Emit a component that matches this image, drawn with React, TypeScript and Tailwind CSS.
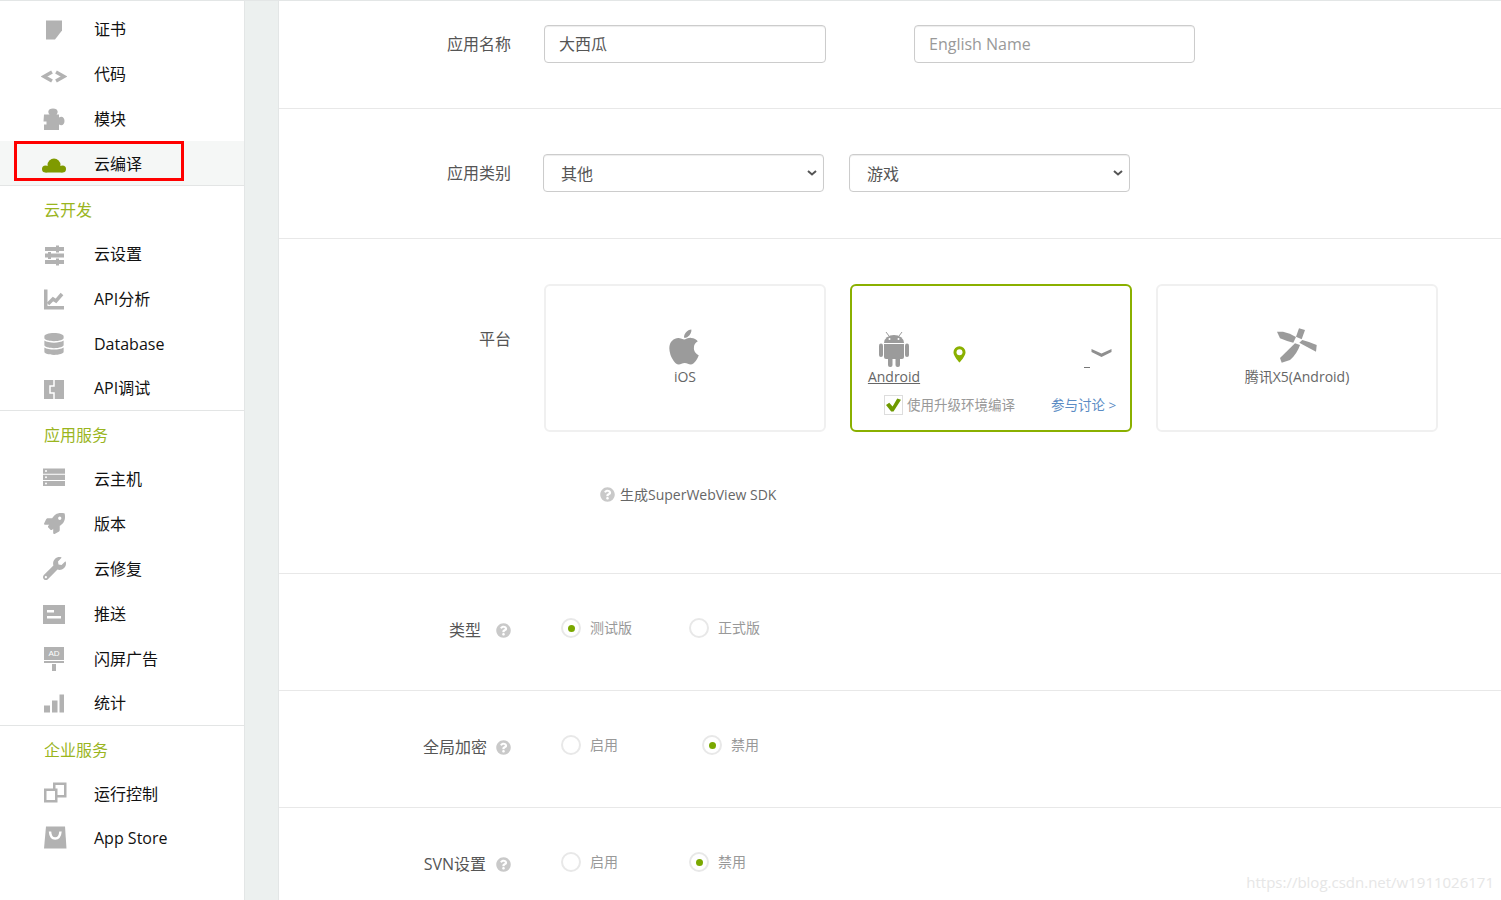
import type { ReactNode } from "react";
import { FaApple, FaCloud, FaDatabase, FaRocket, FaWrench, FaQuestionCircle } from "react-icons/fa";

const G = "#b2b2b2";

function Slot({ children }: { children: ReactNode }) {
  return (
    <svg viewBox="0 0 26 26" className="w-[26px] h-[26px] shrink-0" fill={G}>
      {children}
    </svg>
  );
}

function Fa({ I, size }: { I: typeof FaCloud; size: number }) {
  return (
    <span className="w-[26px] h-[26px] shrink-0 flex items-center justify-center">
      <I size={size} color={G} />
    </span>
  );
}

const icons: Record<string, ReactNode> = {
  cert: <Slot><path d="M5 4.500h16v10l-7 9H5z" /></Slot>,
  code: (
    <Slot>
      <path d="M11 11l-8 4.500 8 4.500M15 11l8 4.500-8 4.500" fill="none" stroke={G} strokeWidth="3.500" />
    </Slot>
  ),
  puzzle: (
    <Slot>
      <path d="M3 8.500h5.500c-.8-.8-1.200-1.700-1.200-2.700C7.300 3.700 9.300 2.500 12 2.500s4.700 1.200 4.700 3.300c0 1-.4 1.900-1.200 2.700H18v3c.7-.5 1.500-.8 2.200-.8 2 0 3.300 1.800 3.300 4.300s-1.300 4.300-3.300 4.300c-.7 0-1.500-.3-2.200-.8v5.500H3v-5.500h2.500v-3H2.500z" />
    </Slot>
  ),
  cloud: (
    <svg viewBox="0 0 26 26" className="w-[26px] h-[26px] shrink-0" fill="#7f9a00">
      <circle cx="4.500" cy="18" r="3.500" />
      <circle cx="13" cy="14" r="6.500" />
      <circle cx="21.500" cy="18" r="3.500" />
      <rect x="4.500" y="15" width="17" height="6.500" />
    </svg>
  ),
  sliders: (
    <Slot>
      <path d="M4 6h19v4H4zM4 12.500h19v4H4zM4 19h19v4H4z" />
      <path d="M15 4.500h3v7h-3zM7 11h3v7H7zM15 17.500h3v7h-3z" />
    </Slot>
  ),
  chart: (
    <Slot>
      <path d="M3 3.500h3.500V20H23v3.500H3z" />
      <path d="M7 18l5-5 3 2 6-7" fill="none" stroke={G} strokeWidth="3.500" />
    </Slot>
  ),
  db: <Fa I={FaDatabase} size={22} />,
  api: (
    <Slot>
      <rect x="3" y="5" width="20" height="19" />
      <path d="M13 5v6H9v7h4v6" fill="none" stroke="#fff" strokeWidth="1.500" />
    </Slot>
  ),
  server: (
    <Slot>
      <path d="M2 2.500h22v5.200H2zM2 8.700h22v5.200H2zM2 14.900h22v5.100H2z" />
      <circle cx="5" cy="5" r="1" fill="#fff" />
      <circle cx="5" cy="11.300" r="1" fill="#fff" />
      <circle cx="5" cy="17.500" r="1" fill="#fff" />
    </Slot>
  ),
  rocket: <Fa I={FaRocket} size={21} />,
  wrench: <Fa I={FaWrench} size={23} />,
  push: (
    <Slot>
      <path d="M2 4h22v19H2z" />
      <path d="M6 9h7v2.500H6zM6 15h14v2.500H6z" fill="#fff" />
    </Slot>
  ),
  ad: (
    <Slot>
      <path d="M3 1h20v13H3zM3 15h20v2H3zM11 18h4v7h-4z" />
      <text x="13" y="10" textAnchor="middle" fontSize="8" fill="#fff" fontFamily="Liberation Sans, sans-serif">AD</text>
    </Slot>
  ),
  bars: (
    <Slot>
      <path d="M3 15.500h6v7H3zM11 10.500h5.500v12H11zM18.500 4.500H23v18h-4.500z" />
    </Slot>
  ),
  windows: (
    <Slot>
      <rect x="13.250" y="2.750" width="11" height="12.500" fill="#fff" stroke={G} strokeWidth="2.500" />
      <rect x="4.250" y="8.750" width="11" height="11.500" fill="#fff" stroke={G} strokeWidth="2.500" />
    </Slot>
  ),
  bag: (
    <Slot>
      <path d="M5 1.500h19l1.500 22H3z" />
      <path d="M9 6.500q.5 7 5.200 7t5.300-7" fill="none" stroke="#fff" strokeWidth="2.500" />
    </Slot>
  ),
};

function Item({ icon, label, active }: { icon: string; label: string; active?: boolean }) {
  return (
    <div className={`h-[45px] last:h-[44px] flex items-center pl-[41px] text-[16px] text-[#111] ${active ? "bg-[#f5f7f6] pt-px" : ""}`}>
      {icons[icon]}
      <span className="ml-[27px]">{label}</span>
    </div>
  );
}

function Heading({ label }: { label: string }) {
  return <div className="h-[45px] flex items-center pl-[44px] pt-[2px] text-[16px] text-[#9ab51e]">{label}</div>;
}

function Help({ className = "" }: { className?: string }) {
  return <FaQuestionCircle size={15} color="#c9c9c9" className={className} />;
}

function Radio({ label, on, width }: { label: string; on?: boolean; width: string }) {
  return (
    <div className={`flex items-center h-[20px] ${width}`}>
      <span className="w-[20px] h-[20px] rounded-full border-2 border-[#e8e8e8] flex items-center justify-center shrink-0">
        {on && <span className="w-[7px] h-[7px] rounded-full bg-[#7aa800]" />}
      </span>
      <span className="ml-[9px] -mt-[2px] text-[14px] text-[#999] whitespace-nowrap">{label}</span>
    </div>
  );
}

function RadioRow({ label, a, b, first, aOn, last, gap }: { label: string; a: string; b: string; first: string; aOn?: boolean; last?: boolean; gap: string }) {
  return (
    <div className={`h-[117px] flex items-start pt-[44px] ${last ? "" : "border-b border-[#e8e8e8]"}`}>
      <div className="w-[232px] h-[24px] flex items-center justify-end text-[16px] text-[#555]">
        <span>{label}</span>
        <Help className={gap} />
      </div>
      <div className="flex ml-[50px]">
        <Radio label={a} on={aOn} width={first} />
        <Radio label={b} on={!aOn} width="w-auto" />
      </div>
    </div>
  );
}

const field = "h-[38px] rounded-[4px] border border-[#ccc] bg-white text-[16px] outline-none shadow-[inset_0_1px_1px_rgba(0,0,0,0.075)]";

function Card({ children, selected }: { children: ReactNode; selected?: boolean }) {
  return (
    <div className={`w-[282px] h-[148px] rounded-[6px] border-2 ${selected ? "border-[#8ab000]" : "border-[#f0f0f0]"}`}>
      {children}
    </div>
  );
}

function SelectBox({ value, className }: { value: string; className: string }) {
  return (
    <div className={`relative w-[281px] ${className}`}>
      <select defaultValue={value} className={`${field} w-full appearance-none pl-[17px] pt-[2px] text-[#555]`}>
        <option>{value}</option>
      </select>
      <svg viewBox="0 0 10 6" className="absolute right-[7px] top-[16px] w-[10px] h-[6px] pointer-events-none">
        <path d="M1 1l4 3.500L9 1" fill="none" stroke="#555" strokeWidth="2" />
      </svg>
    </div>
  );
}

export default function App() {
  return (
    <div className="relative flex h-[900px] w-full overflow-hidden border-t border-[#e3e6e6] bg-white font-['Open_Sans','Noto_Sans_CJK_SC',sans-serif]">
      <aside className="w-[244px] shrink-0 pt-[5px]">
        <div className="relative border-b border-[#e3e5e5]">
          <div className="absolute left-[14px] top-[135px] w-[170px] h-[40px] border-[3px] border-[#f00]" />
          <Item icon="cert" label="证书" />
          <Item icon="code" label="代码" />
          <Item icon="puzzle" label="模块" />
          <Item icon="cloud" label="云编译" active />
        </div>
        <div className="border-b border-[#e3e5e5]">
          <Heading label="云开发" />
          <Item icon="sliders" label="云设置" />
          <Item icon="chart" label="API分析" />
          <Item icon="db" label="Database" />
          <Item icon="api" label="API调试" />
        </div>
        <div className="border-b border-[#e3e5e5]">
          <Heading label="应用服务" />
          <Item icon="server" label="云主机" />
          <Item icon="rocket" label="版本" />
          <Item icon="wrench" label="云修复" />
          <Item icon="push" label="推送" />
          <Item icon="ad" label="闪屏广告" />
          <Item icon="bars" label="统计" />
        </div>
        <div>
          <Heading label="企业服务" />
          <Item icon="windows" label="运行控制" />
          <Item icon="bag" label="App Store" />
        </div>
      </aside>

      <div className="w-[35px] shrink-0 bg-[#ecf0ef] border-x border-[#e3e6e6]" />

      <main className="flex-1 min-w-0">
        <div className="h-[108px] border-b border-[#e8e8e8] flex items-start pt-[24px]">
          <div className="w-[232px] h-[38px] flex items-center justify-end text-[16px] text-[#555]">应用名称</div>
          <input defaultValue="大西瓜" className={`${field} w-[282px] ml-[33px] px-[14px] pb-[2px] text-[#555]`} />
          <input placeholder="English Name" className={`${field} w-[281px] ml-[88px] px-[14px] text-[#555] placeholder:text-[#999]`} />
        </div>

        <div className="h-[130px] border-b border-[#e8e8e8] flex items-start pt-[45px]">
          <div className="w-[232px] h-[38px] flex items-center justify-end text-[16px] text-[#555]">应用类别</div>
          <SelectBox value="其他" className="ml-[32px]" />
          <SelectBox value="游戏" className="ml-[25px]" />
        </div>

        <div className="h-[335px] border-b border-[#e8e8e8] flex items-start pt-[45px]">
          <div className="w-[232px] h-[24px] mt-[43px] flex items-center justify-end text-[16px] text-[#555]">平台</div>
          <div className="ml-[33px]">
            <div className="flex gap-[24px]">
              <Card>
                <div className="flex flex-col items-center pt-[41px] text-[14px] text-[#666]">
                  <FaApple size={40} color="#9b9b9b" className="-ml-[2px]" />
                  <span className="leading-[20px]">iOS</span>
                </div>
              </Card>
              <Card selected>
                <div className="pt-[46px] pl-[15px] flex items-start">
                  <div className="w-[54px] flex flex-col items-center">
                    <svg viewBox="0 0 30 35" className="w-[30px] h-[35px]" fill="#9b9b9b">
                      <path d="M7 0l3 4M23 0l-3 4" stroke="#9b9b9b" strokeWidth="1" />
                      <path d="M5 11a10 8 0 0 1 20 0z" />
                      <circle cx="10.500" cy="7" r="1" fill="#fff" />
                      <circle cx="19.500" cy="7" r="1" fill="#fff" />
                      <path d="M5 12h20v13a2 2 0 0 1-2 2H7a2 2 0 0 1-2-2z" />
                      <rect x="0" y="11.500" width="4" height="13.500" rx="2" />
                      <rect x="26" y="11.500" width="4" height="13.500" rx="2" />
                      <rect x="9" y="25" width="4.500" height="10" rx="2" />
                      <rect x="16.500" y="25" width="4.500" height="10" rx="2" />
                    </svg>
                    <span className="text-[14px] leading-[20px] text-[#666] underline">Android</span>
                  </div>
                  <svg viewBox="0 0 14 18" className="w-[13px] h-[17px] ml-[32px] mt-[14px]">
                    <path d="M7 0a6.500 6.500 0 0 1 6.500 6.500C13.500 11 7 17.500 7 17.500S.5 11 .5 6.500A6.500 6.500 0 0 1 7 0z" fill="#8ab000" />
                    <circle cx="7" cy="6.500" r="3.200" fill="#fff" />
                  </svg>
                  <div className="ml-[118px] w-[6px] h-px bg-[#777] mt-[35px]" />
                  <svg viewBox="0 0 20 9" className="w-[21px] h-[9px] ml-[1px] mt-[16px]">
                    <path d="M0 1l10 4.500L20 1v3L10 9 0 4z" fill="#8f8f8f" />
                  </svg>
                </div>
                <div className="flex items-center pl-[32px] mt-[8px] text-[13.5px] h-[20px]">
                  <span className="w-[19px] h-[20px] border border-[#ddd] flex items-center justify-center shrink-0">
                    <svg viewBox="0 0 16 14" className="w-[15px] h-[14px]">
                      <path d="M0 7l3.500-2.500 3.500 4L12 0l4 1.500L8 14H5.500z" fill="#6f9a00" />
                    </svg>
                  </span>
                  <span className="ml-[4px] text-[#999]">使用升级环境编译</span>
                  <span className="ml-[36px] text-[#5b8cc4] whitespace-nowrap">参与讨论 &gt;</span>
                </div>
              </Card>
              <Card>
                <div className="flex flex-col items-center pt-[42px] text-[14px] text-[#666]">
                  <svg viewBox="0 0 40 35" className="w-[40px] h-[35px]" fill="#9b9b9b">
                    <path d="M0 3.700h6Q13 5 19 9l-2.700 5.700Q9 13 3 10.300z" />
                    <path d="M22 .3l6 1.700-3.300 9.300L19 8.700z" />
                    <path d="M25.300 12Q33 14 39.700 17l-.7 6.700-9.300-5-7.400-4z" />
                    <path d="M18 15.300l5 1.700q-3 9-10 15l-8.300 2.700L3 30z" />
                  </svg>
                  <span className="leading-[20px] mt-[4px]">腾讯X5(Android)</span>
                </div>
              </Card>
            </div>
            <div className="flex items-center ml-[56px] mt-[52px] h-[20px] text-[14px] text-[#666]">
              <Help />
              <span className="ml-[5px]">生成SuperWebView SDK</span>
            </div>
          </div>
        </div>

        <RadioRow label="类型" a="测试版" b="正式版" first="w-[128px]" aOn gap="ml-[15px]" />
        <RadioRow label="全局加密" a="启用" b="禁用" first="w-[141px]" gap="ml-[9px]" />
        <RadioRow label="SVN设置" a="启用" b="禁用" first="w-[128px]" last gap="ml-[10px]" />
      </main>

      <div className="absolute right-[7px] bottom-[7px] text-[15px] text-[#e6e6e6]">https://blog.csdn.net/w1911026171</div>
    </div>
  );
}
